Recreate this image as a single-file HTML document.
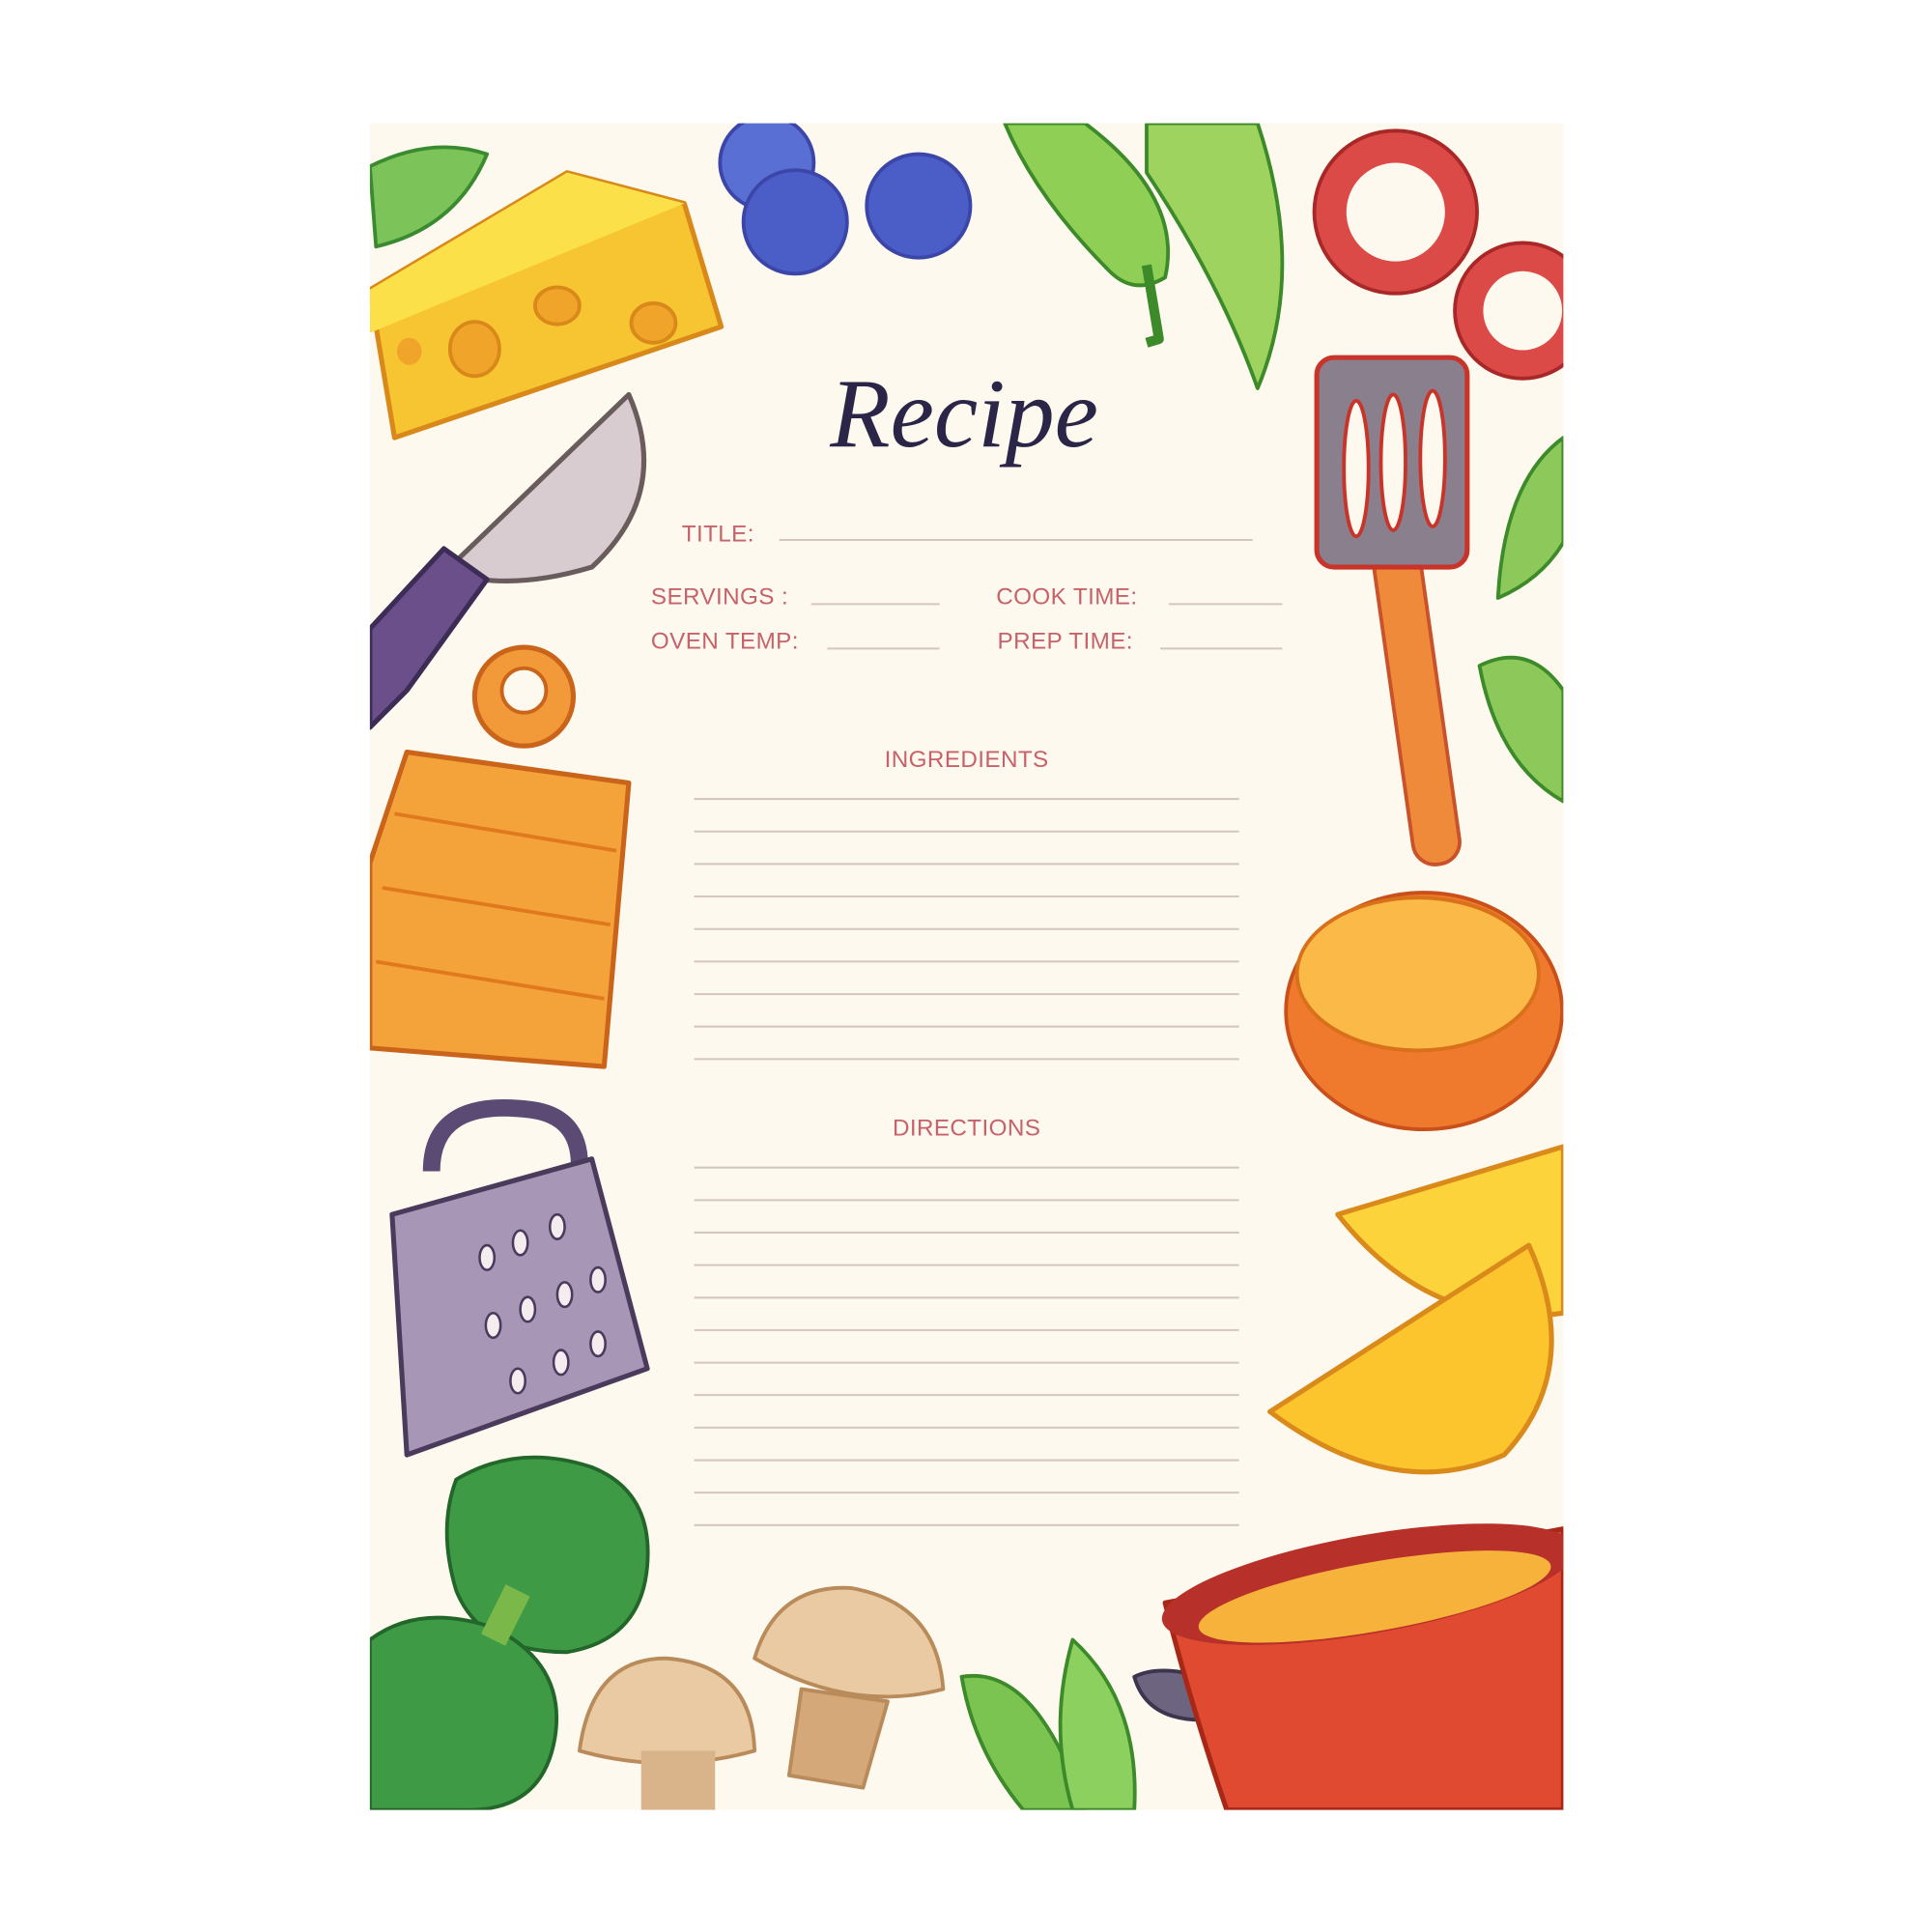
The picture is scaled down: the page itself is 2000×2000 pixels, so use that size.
<!DOCTYPE html>
<html><head><meta charset="utf-8"><style>
html,body{margin:0;padding:0;background:#fff;}
svg{display:block;}
.l{font-family:"Liberation Sans",sans-serif;font-size:19px;fill:#c8626a;letter-spacing:0.3px;}
.ln{stroke:#d6c6c2;stroke-width:1.6;}
</style></head><body>
<svg width="2000" height="2000" viewBox="0 0 1567 1567" xmlns="http://www.w3.org/2000/svg">
<rect width="1567" height="1567" fill="#fff"/>
<rect x="300" y="100" width="968" height="1368" fill="#fdf9ee"/>
<defs><clipPath id="c"><rect x="300" y="100" width="968" height="1368"/></clipPath></defs>
<g clip-path="url(#c)" stroke-linejoin="round">
<path d="M300 135 Q350 110 395 125 Q370 185 305 200 Z" fill="#7cc45a" stroke="#3a8a30" stroke-width="3"/>
<path d="M300 235 L460 140 L555 165 L585 265 L320 355 Z" fill="#f7c531" stroke="#d9891a" stroke-width="4"/>
<path d="M300 235 L460 140 L555 165 L300 270 Z" fill="#fbe04a"/>
<ellipse cx="385" cy="283" rx="20" ry="22" fill="#f0a42a" stroke="#d9891a" stroke-width="3"/>
<ellipse cx="452" cy="248" rx="18" ry="15" fill="#f0a42a" stroke="#d9891a" stroke-width="3"/>
<ellipse cx="530" cy="262" rx="18" ry="16" fill="#f0a42a" stroke="#d9891a" stroke-width="3"/>
<ellipse cx="332" cy="285" rx="10" ry="11" fill="#f0a42a"/>
<circle cx="622" cy="132" r="38" fill="#5a6fd4" stroke="#3b46a8" stroke-width="3"/>
<circle cx="645" cy="180" r="42" fill="#4b5ec8" stroke="#3b46a8" stroke-width="3"/>
<circle cx="745" cy="167" r="42" fill="#4b5ec8" stroke="#3b46a8" stroke-width="3"/>
<path d="M815 100 L880 100 Q960 160 945 225 Q920 240 900 220 Q840 160 815 100Z" fill="#8fcf55" stroke="#3d8a2a" stroke-width="3"/>
<path d="M930 215 L940 275 L930 278" fill="none" stroke="#3d8a2a" stroke-width="8"/>
<path d="M930 100 L1020 100 Q1060 220 1020 315 Q990 230 930 140Z" fill="#9ed35f" stroke="#3d8a2a" stroke-width="3"/>
<circle cx="1132" cy="172" r="66" fill="#dc4a48" stroke="#a82828" stroke-width="3"/>
<circle cx="1132" cy="172" r="40" fill="#fdf9ee"/>
<circle cx="1235" cy="252" r="55" fill="#dc4a48" stroke="#a82828" stroke-width="3"/>
<circle cx="1235" cy="252" r="32" fill="#fdf9ee"/>
<path d="M370 455 L510 320 Q545 400 480 460 Q430 475 390 470Z" fill="#d8ccd0" stroke="#6a5c5c" stroke-width="4"/>
<path d="M300 510 L360 445 L395 470 L330 560 L300 590Z" fill="#6b4f8a" stroke="#3d2c55" stroke-width="4"/>
<rect x="1130" y="440" width="38" height="262" rx="18" transform="rotate(-8 1150 570)" fill="#ef8a3a" stroke="#c9522a" stroke-width="3"/>
<rect x="1068" y="290" width="122" height="170" rx="14" fill="#8a7f8c" stroke="#c9342a" stroke-width="4"/>
<ellipse cx="1100" cy="380" rx="10" ry="55" fill="#fdf9ee" stroke="#c9342a" stroke-width="3"/>
<ellipse cx="1130" cy="375" rx="10" ry="55" fill="#fdf9ee" stroke="#c9342a" stroke-width="3"/>
<ellipse cx="1162" cy="372" rx="10" ry="55" fill="#fdf9ee" stroke="#c9342a" stroke-width="3"/>
<path d="M1268 355 Q1220 390 1215 485 Q1250 470 1268 440Z" fill="#8cc95a" stroke="#3d8a2a" stroke-width="3"/>
<path d="M1200 540 Q1240 520 1268 560 L1268 650 Q1215 620 1200 540Z" fill="#8cc95a" stroke="#3d8a2a" stroke-width="3"/>
<circle cx="425" cy="565" r="40" fill="#f29a3a" stroke="#c9641a" stroke-width="4"/>
<circle cx="425" cy="560" r="18" fill="#fdf9ee" stroke="#c9641a" stroke-width="3"/>
<path d="M330 610 L510 635 L490 865 L300 850 L300 700Z" fill="#f4a23a" stroke="#c9641a" stroke-width="4"/>
<path d="M320 660 L500 690 M310 720 L495 750 M305 780 L490 810" stroke="#e0791e" stroke-width="3"/>
<ellipse cx="1155" cy="820" rx="112" ry="96" fill="#ef7a2e" stroke="#c9501a" stroke-width="3"/>
<ellipse cx="1150" cy="790" rx="98" ry="62" fill="#fbb948" stroke="#d9701a" stroke-width="3"/>
<path d="M350 950 Q350 890 430 900 Q470 905 470 945" fill="none" stroke="#5b4a73" stroke-width="14"/>
<path d="M318 985 L480 940 L525 1110 L330 1180Z" fill="#a896b6" stroke="#4a3a5c" stroke-width="4"/>
<g fill="#f4ecef" stroke="#4a3a5c" stroke-width="2">
<ellipse cx="395" cy="1020" rx="6" ry="10"/><ellipse cx="422" cy="1008" rx="6" ry="10"/><ellipse cx="452" cy="995" rx="6" ry="10"/>
<ellipse cx="400" cy="1075" rx="6" ry="10"/><ellipse cx="428" cy="1062" rx="6" ry="10"/><ellipse cx="458" cy="1050" rx="6" ry="10"/><ellipse cx="485" cy="1038" rx="6" ry="10"/>
<ellipse cx="420" cy="1120" rx="6" ry="10"/><ellipse cx="455" cy="1105" rx="6" ry="10"/><ellipse cx="485" cy="1090" rx="6" ry="10"/>
</g>
<path d="M1085 985 L1268 930 L1268 1065 Q1160 1080 1085 985Z" fill="#fcd33a" stroke="#d98a1a" stroke-width="4"/>
<path d="M1030 1145 L1240 1010 Q1285 1110 1220 1180 Q1130 1220 1030 1145Z" fill="#fcc52e" stroke="#d98a1a" stroke-width="4"/>
<path d="M370 1200 Q420 1170 480 1190 Q530 1210 525 1270 Q520 1330 460 1340 Q390 1340 370 1290 Q355 1240 370 1200Z" fill="#3f9a45" stroke="#22662a" stroke-width="3"/>
<path d="M300 1330 Q340 1300 400 1320 Q460 1350 450 1410 Q440 1468 380 1468 L300 1468Z" fill="#3f9a45" stroke="#22662a" stroke-width="3"/>
<path d="M400 1330 L420 1290" stroke="#7ab84a" stroke-width="22"/>
<path d="M470 1420 Q480 1345 540 1345 Q610 1350 612 1420 Q540 1440 470 1420Z" fill="#e9caa2" stroke="#b98a5a" stroke-width="3"/>
<rect x="520" y="1420" width="60" height="48" fill="#d9b48a"/>
<path d="M612 1345 Q630 1285 690 1288 Q760 1300 765 1370 Q690 1390 612 1345Z" fill="#e9caa2" stroke="#b98a5a" stroke-width="3"/>
<path d="M650 1370 L720 1380 L700 1450 L640 1440Z" fill="#d4a878" stroke="#b98a5a" stroke-width="3"/>
<path d="M780 1360 Q840 1350 880 1468 L830 1468 Q790 1420 780 1360Z" fill="#7cc452" stroke="#3d8a2a" stroke-width="3"/>
<path d="M870 1330 Q925 1380 920 1468 L870 1468 Q850 1400 870 1330Z" fill="#8cd060" stroke="#3d8a2a" stroke-width="3"/>
<path d="M920 1360 Q940 1350 975 1360 L975 1395 Q930 1395 920 1360Z" fill="#6d6480" stroke="#3d3550" stroke-width="3"/>
<path d="M945 1300 L1268 1240 L1268 1468 L995 1468 Q965 1380 945 1300Z" fill="#e04a30" stroke="#a82818" stroke-width="4"/>
<ellipse cx="1110" cy="1285" rx="170" ry="40" transform="rotate(-10 1110 1285)" fill="#b8302a"/>
<ellipse cx="1115" cy="1295" rx="145" ry="28" transform="rotate(-10 1115 1295)" fill="#f6b23a"/>
</g>
<text x="782" y="362" text-anchor="middle" font-family="'Liberation Serif',serif" font-style="italic" font-size="80" fill="#2b2548">Recipe</text>
<text class="l" x="553" y="439">TITLE:</text>
<line class="ln" x1="632" y1="438" x2="1016" y2="438"/>
<text class="l" x="528" y="490">SERVINGS :</text>
<line class="ln" x1="658" y1="490" x2="762" y2="490"/>
<text class="l" x="808" y="490">COOK TIME:</text>
<line class="ln" x1="948" y1="490" x2="1040" y2="490"/>
<text class="l" x="528" y="526">OVEN TEMP:</text>
<line class="ln" x1="671" y1="526" x2="762" y2="526"/>
<text class="l" x="809" y="526">PREP TIME:</text>
<line class="ln" x1="941" y1="526" x2="1040" y2="526"/>
<text class="l" x="784" y="622" text-anchor="middle">INGREDIENTS</text>
<g class="ln">
<line x1="563" y1="648" x2="1005" y2="648"/><line x1="563" y1="674.4" x2="1005" y2="674.4"/><line x1="563" y1="700.8" x2="1005" y2="700.8"/><line x1="563" y1="727.1" x2="1005" y2="727.1"/><line x1="563" y1="753.5" x2="1005" y2="753.5"/><line x1="563" y1="779.9" x2="1005" y2="779.9"/><line x1="563" y1="806.3" x2="1005" y2="806.3"/><line x1="563" y1="832.6" x2="1005" y2="832.6"/><line x1="563" y1="859" x2="1005" y2="859"/>
</g>
<text class="l" x="784" y="921" text-anchor="middle">DIRECTIONS</text>
<g class="ln">
<line x1="563" y1="947" x2="1005" y2="947"/><line x1="563" y1="973.4" x2="1005" y2="973.4"/><line x1="563" y1="999.7" x2="1005" y2="999.7"/><line x1="563" y1="1026.1" x2="1005" y2="1026.1"/><line x1="563" y1="1052.5" x2="1005" y2="1052.5"/><line x1="563" y1="1078.8" x2="1005" y2="1078.8"/><line x1="563" y1="1105.2" x2="1005" y2="1105.2"/><line x1="563" y1="1131.5" x2="1005" y2="1131.5"/><line x1="563" y1="1157.9" x2="1005" y2="1157.9"/><line x1="563" y1="1184.3" x2="1005" y2="1184.3"/><line x1="563" y1="1210.6" x2="1005" y2="1210.6"/><line x1="563" y1="1237" x2="1005" y2="1237"/>
</g>
</svg>
</body></html>
